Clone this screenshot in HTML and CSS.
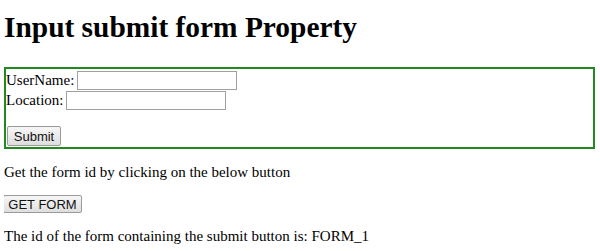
FILE: index.html
```html
<!DOCTYPE html>
<html lang="en">

<head>
    <meta charset="UTF-8">
    <title>Input submit form Property</title>
    <link rel="stylesheet" href="styles.css">
</head>

<body>
    <h1 class="title">Input submit form Property</h1>
    <form id="FORM_1" class="user_form">
        <div class="row">UserName: <input type="text" class="field"></div>
        <div class="row">Location: <input type="text" class="field"></div>
        <div class="row gap">
            <input type="submit" id="Submit" value="Submit" class="btn submit_btn">
        </div>
    </form>
    <p class="tips">Get the form id by clicking on the below button</p>
    <button type="button" class="btn get_btn" onclick="getForm()">GET FORM</button>
    <p class="result" id="result">The id of the form containing the submit button is: FORM_1</p>

    <script>
        function getForm() {
            var f = document.getElementById('Submit').form.id;
            document.getElementById('result').innerHTML = 'The id of the form containing the submit button is: ' + f;
        }
    </script>
</body>

</html>
```

FILE: styles.css
```css
body {
    margin: 0px 5px 0px 4px;
    font-family: "Liberation Serif", "Times New Roman", serif;
    font-size: 15px;
    color: #000;
    background-color: #fff;
}

.title {
    margin: 0px;
    padding-top: 10px;
    font-size: 29.4px;
    font-weight: bold;
    line-height: 34px;
}

.user_form {
    margin-top: 23px;
    padding: 1px 1px 1px 0px;
    border: 2px solid #1f8a1f;
}

.row {
    display: flex;
    align-items: center;
    height: 20px;
}

.gap {
    margin-top: 16px;
}

.field {
    width: 156px;
    height: 15px;
    margin: 0px 0px 0px 3px;
    padding: 1px;
    border: 1px solid #a0a0a0;
    font-size: 13px;
}

.btn {
    font-family: "Liberation Sans", Arial, sans-serif;
    font-size: 13px;
    color: #111;
    background: linear-gradient(#f6f6f6, #dedede);
    border: 1px solid #9a9a9a;
    border-radius: 2px;
    padding: 0px;
}

.submit_btn {
    width: 54px;
    height: 20px;
    margin-left: 1px;
}

.tips {
    margin: 15px 0px 0px 0px;
    line-height: 17px;
}

.get_btn {
    display: block;
    width: 79px;
    height: 18px;
    margin-top: 14px;
    margin-left: -1px;
}

.result {
    margin: 15px 0px 0px 0px;
    line-height: 17px;
}
```
